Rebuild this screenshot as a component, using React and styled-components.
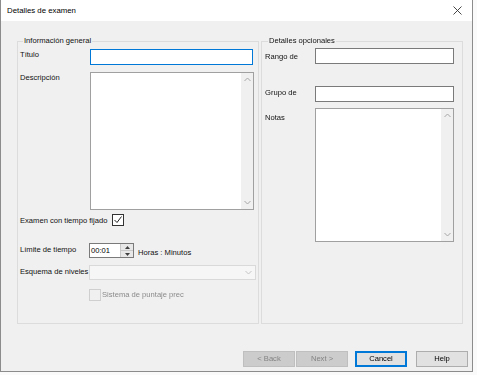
import React from 'react';
import styled, { createGlobalStyle } from 'styled-components';

const GlobalStyle = createGlobalStyle`
  html, body {
    margin: 0;
    padding: 0;
    background: #f4f4f4;
  }
  body {
    font-family: "Liberation Sans", Arial, sans-serif;
    font-size: 7.6px;
    color: #000;
  }
`;

const Screen = styled.div`
  width: 477px;
  height: 375px;
  overflow: hidden;
  background: #fafafa;
`;

const Window = styled.div`
  width: 473px;
  height: 372px;
  box-sizing: border-box;
  border: 1px solid #8c8c8c;
  border-top: none;
  background: #f0f0f0;
  display: flex;
  flex-direction: column;
`;

const TitleBar = styled.div`
  height: 21px;
  background: #fff;
  display: flex;
  align-items: center;
  justify-content: space-between;
  padding: 0 10px 0 6px;
  font-size: 7.8px;
`;

const Body = styled.div`
  flex: 1;
  display: flex;
  flex-direction: column;
  padding: 13px 4px 0 16px;
`;

const Groups = styled.div`
  display: flex;
  gap: 2px;
`;

const Group = styled.fieldset`
  margin: 0;
  width: ${p => p.$width}px;
  height: 290px;
  box-sizing: border-box;
  border: 1px solid #dcdcdc;
  padding: 0 2px 0 ${p => p.$padLeft}px;
  display: flex;
  flex-direction: column;
`;

const Legend = styled.legend`
  padding: 0 1px;
  margin-left: 3px;
  line-height: 14px;
  color: #111;
`;

const Row = styled.div`
  display: flex;
  align-items: flex-start;
  margin-top: ${p => p.$top || 0}px;
  padding-left: ${p => p.$indent || 0}px;
`;

const Label = styled.div`
  width: ${p => p.$width}px;
  flex: none;
  padding-top: ${p => p.$pad || 0}px;
  line-height: 12px;
  color: ${p => (p.$disabled ? '#8a8a8a' : '#111')};
  white-space: nowrap;
`;

const TextBox = styled.input`
  box-sizing: border-box;
  width: ${p => p.$width}px;
  height: ${p => p.$height || 16}px;
  margin: 0;
  padding: 0 3px;
  font: inherit;
  background: #fff;
  border: 1px solid ${p => (p.$focused ? '#0078d7' : '#7a7a7a')};
  outline: none;
  caret-color: #000;
`;

const MemoBox = styled.div`
  box-sizing: border-box;
  width: ${p => p.$width}px;
  height: ${p => p.$height}px;
  border: 1px solid #a0a0a0;
  background: #fff;
  display: flex;
`;

const MemoInput = styled.textarea`
  flex: 1;
  border: none;
  resize: none;
  outline: none;
  margin: 0;
  padding: 2px 3px;
  font: inherit;
  background: transparent;
`;

const ScrollTrack = styled.div`
  width: 12px;
  background: #f0f0f0;
  display: flex;
  flex-direction: column;
  justify-content: space-between;
  align-items: center;
  padding: 4px 0;
`;

const CheckMark = styled.span`
  box-sizing: border-box;
  width: 12px;
  height: 12px;
  flex: none;
  border: 1px solid ${p => (p.$disabled ? '#cfcfcf' : '#333')};
  background: ${p => (p.$disabled ? '#f0f0f0' : '#fff')};
  display: flex;
  align-items: center;
  justify-content: center;
`;

const InlineText = styled.span`
  line-height: 12px;
  color: ${p => (p.$disabled ? '#8a8a8a' : '#111')};
  margin-left: ${p => p.$gap || 0}px;
  margin-top: ${p => p.$top || 0}px;
  white-space: nowrap;
`;

const Spin = styled.div`
  display: flex;
  box-sizing: border-box;
  height: 15px;
  border: 1px solid #7a7a7a;
  background: #fff;
`;

const SpinValue = styled.div`
  width: 29px;
  padding-left: 1px;
  line-height: 13px;
`;

const SpinButtons = styled.div`
  width: 12px;
  display: flex;
  flex-direction: column;
  background: #e8e8e8;
  border-left: 1px solid #c8c8c8;
`;

const SpinHalf = styled.div`
  flex: 1;
  display: flex;
  align-items: center;
  justify-content: center;
  border-top: ${p => (p.$lower ? '1px solid #c8c8c8' : 'none')};
`;

const Combo = styled.div`
  box-sizing: border-box;
  width: 167px;
  height: 15px;
  border: 1px solid #d9d9d9;
  background: #f6f6f6;
  display: flex;
  justify-content: flex-end;
  align-items: center;
  padding-right: 3px;
`;

const Footer = styled.div`
  display: flex;
  justify-content: flex-end;
  padding-top: 27px;
`;

const Button = styled.button`
  box-sizing: border-box;
  width: 52px;
  height: 16px;
  margin: 0 0 0 ${p => p.$gap || 0}px;
  padding: 0;
  font: inherit;
  line-height: 12px;
  color: ${p => (p.disabled ? '#838383' : '#000')};
  background: ${p => (p.disabled ? '#cccccc' : '#e1e1e1')};
  border: 1px solid ${p => (p.disabled ? '#bfbfbf' : p.$default ? '#0078d7' : '#adadad')};
  box-shadow: ${p => (p.$default ? 'inset 0 0 0 1px #0078d7' : 'none')};
`;

const Chevron = ({ up }) => (
  <svg width="7" height="5" viewBox="0 0 7 5">
    <path d={up ? 'M0.5 4 L3.5 1 L6.5 4' : 'M0.5 1 L3.5 4 L6.5 1'} fill="none" stroke="#a6a6a6" strokeWidth="1" />
  </svg>
);

const Arrow = ({ up }) => (
  <svg width="5" height="3" viewBox="0 0 5 3">
    <path d={up ? 'M0 3 L2.5 0 L5 3 Z' : 'M0 0 L2.5 3 L5 0 Z'} fill="#404040" />
  </svg>
);

const Memo = ({ width, height }) => (
  <MemoBox $width={width} $height={height}>
    <MemoInput />
    <ScrollTrack>
      <Chevron up />
      <Chevron />
    </ScrollTrack>
  </MemoBox>
);

export default function App() {
  return (
    <Screen>
      <GlobalStyle />
      <Window>
        <TitleBar>
          <span>Detalles de examen</span>
          <svg width="9" height="9" viewBox="0 0 9 9">
            <path d="M0.5 0.5 L8.5 8.5 M8.5 0.5 L0.5 8.5" stroke="#333" strokeWidth="0.9" />
          </svg>
        </TitleBar>
        <Body>
          <Groups>
            <Group $width={242} $padLeft={2}>
              <Legend>Información general</Legend>
              <Row $top={1}>
                <Label $width={70} $pad={0}>Título</Label>
                <TextBox $width={163} $height={16} $focused autoFocus />
              </Row>
              <Row $top={7}>
                <Label $width={70} $pad={0}>Descripción</Label>
                <Memo width={164} height={138} />
              </Row>
              <Row $top={4}>
                <Label $width={92} $pad={1}>Examen con tiempo fijado</Label>
                <CheckMark>
                  <svg width="10" height="10" viewBox="0 0 10 10">
                    <path d="M1.5 5 L4 7.5 L8.5 1.5" fill="none" stroke="#222" strokeWidth="1" />
                  </svg>
                </CheckMark>
              </Row>
              <Row $top={16}>
                <Label $width={69} $pad={1}>Límite de tiempo</Label>
                <Spin>
                  <SpinValue>00:01</SpinValue>
                  <SpinButtons>
                    <SpinHalf><Arrow up /></SpinHalf>
                    <SpinHalf $lower><Arrow /></SpinHalf>
                  </SpinButtons>
                </Spin>
                <InlineText $gap={4} $top={4}>Horas : Minutos</InlineText>
              </Row>
              <Row $top={6}>
                <Label $width={69} $pad={1}>Esquema de niveles</Label>
                <Combo>
                  <svg width="7" height="5" viewBox="0 0 7 5">
                    <path d="M0.5 1 L3.5 4 L6.5 1" fill="none" stroke="#c4c4c4" strokeWidth="1" />
                  </svg>
                </Combo>
              </Row>
              <Row $top={9} $indent={69}>
                <CheckMark $disabled />
                <InlineText $disabled $gap={1}>Sistema de puntaje prec</InlineText>
              </Row>
            </Group>
            <Group $width={202} $padLeft={3}>
              <Legend>Detalles opcionales</Legend>
              <Row $top={0}>
                <Label $width={50} $pad={3}>Rango de</Label>
                <TextBox $width={139} $height={16} />
              </Row>
              <Row $top={22}>
                <Label $width={50} $pad={1}>Grupo de</Label>
                <TextBox $width={139} $height={16} />
              </Row>
              <Row $top={6}>
                <Label $width={50} $pad={4}>Notas</Label>
                <Memo width={139} height={134} />
              </Row>
            </Group>
          </Groups>
          <Footer>
            <Button disabled>&lt; Back</Button>
            <Button disabled $gap={1}>Next &gt;</Button>
            <Button $default $gap={7}>Cancel</Button>
            <Button $gap={9}>Help</Button>
          </Footer>
        </Body>
      </Window>
    </Screen>
  );
}
